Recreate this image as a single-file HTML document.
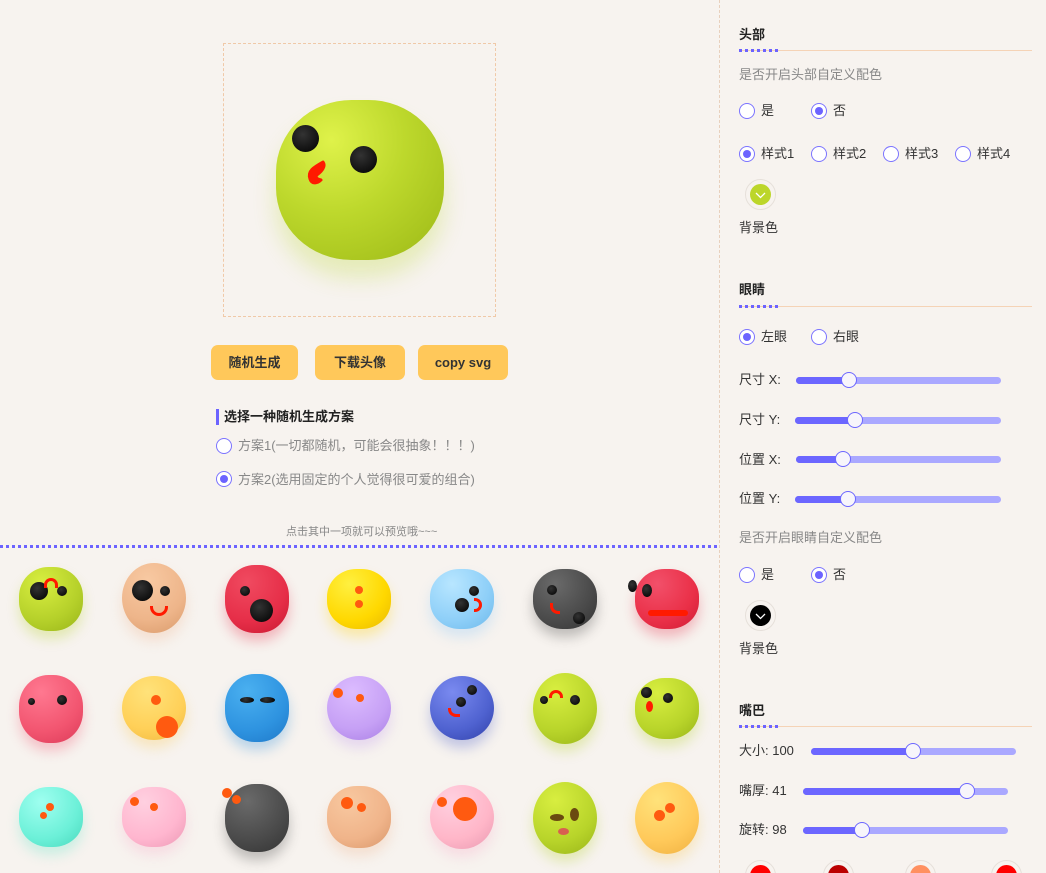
<!DOCTYPE html>
<html><head><meta charset="utf-8"><style>
*{margin:0;padding:0;box-sizing:border-box}
html,body{width:1046px;height:873px;overflow:hidden}
body{background:#f7f3ef;font-family:"Liberation Sans","Noto Sans CJK SC",sans-serif;color:#333;position:relative;font-size:13px;line-height:16px}
.a{position:absolute}
.box{left:223px;top:43px;width:273px;height:274px;border:1px dashed #f0c9a8}
.btn{top:345px;height:35px;background:#ffc85a;border-radius:7px;font-size:13px;font-weight:bold;color:#333;text-align:center;line-height:35px}
.r{width:16px;height:16px;border:1px solid #7b73ff;border-radius:50%;background:#fff}
.r.on::after{content:"";position:absolute;left:3px;top:3px;width:8px;height:8px;border-radius:50%;background:#6c63ff}
.side{left:719px;top:0;height:873px;border-left:1px dashed #e8d0bc}
.h{font-weight:bold;font-size:13px;color:#222}
.ln{height:1px;background:#f5d3b6;width:293px;left:739px}
.dt{height:3px;width:40px;left:739px;background:repeating-linear-gradient(90deg,#6c63ff 0 3px,transparent 3px 6px)}
.g{color:#888;font-size:13px}
.tk{height:7px;border-radius:4px;background:#aaa8ff}
.tk i{position:absolute;left:0;top:0;height:7px;border-radius:4px;background:#6c66ff}
.th{width:16px;height:16px;border-radius:50%;background:#f7f5fb;border:1px solid #6c66ff;top:-5px}
.b{width:64px;height:64px;border-radius:46%}
.e{position:absolute;border-radius:50%;background:radial-gradient(circle at 40% 35%,#333,#000)}
.m{position:absolute;border:3px solid #ff1a00;border-radius:10px}
.o{position:absolute;border-radius:50%;background:#ff5a10}
.cp{width:31px;height:31px;border-radius:50%;border:1px solid #e6e0da}
.ci{width:21px;height:21px;border-radius:50%}
</style></head><body>
<div class="a box"></div>
<div class="a" style="left:276px;top:100px;width:168px;height:160px;border-radius:45%;background:radial-gradient(circle at 33% 25%,#dff24a,#bdd82c 45%,#a8c41e 80%,#8ea810);box-shadow:0 18px 22px rgba(190,220,60,.3)"></div>
<div class="e" style="left:292px;top:125px;width:27px;height:27px"></div>
<div class="e" style="left:350px;top:146px;width:27px;height:27px"></div>
<svg class="a" style="left:300px;top:155px" width="40" height="40"><path d="M23 7 C14 12,7 16,10 24 C12 30,18 28,21 25 C17 24,14 22,18 19 C22 16,26 11,23 7Z" fill="#ff1a00" stroke="#ff1a00" stroke-width="3" stroke-linejoin="round"/></svg>

<div class="a btn" style="left:211px;width:87px">随机生成</div>
<div class="a btn" style="left:315px;width:90px">下载头像</div>
<div class="a btn" style="left:418px;width:90px">copy svg</div>
<div class="a" style="left:216px;top:409px;width:3px;height:16px;background:#6c63ff"></div>
<div class="a h" style="left:224px;top:409px">选择一种随机生成方案</div>
<div class="a r" style="left:216px;top:438px"></div><div class="a g" style="left:238px;top:438px">方案1(一切都随机，可能会很抽象！！！)</div>
<div class="a r on" style="left:216px;top:471px"></div><div class="a g" style="left:238px;top:472px">方案2(选用固定的个人觉得很可爱的组合)</div>
<div class="a g" style="left:286px;top:524px;font-size:11px">点击其中一项就可以预览哦~~~</div>
<div class="a" style="left:0;top:545px;width:718px;height:3px;background:repeating-linear-gradient(90deg,#6c63ff 0 3px,transparent 3px 6px)"></div>

<!-- row1 -->
<div class="a b" style="left:19px;top:567px;background:radial-gradient(circle at 35% 25%,#d8ee40,#b5d02a 60%,#98b418);box-shadow:0 8px 12px rgba(180,210,40,.3)"></div>
<div class="e" style="left:30px;top:582px;width:18px;height:18px"></div><div class="e" style="left:57px;top:586px;width:10px;height:10px"></div>
<div class="a m" style="left:44px;top:578px;width:14px;height:10px;border-bottom:none;border-radius:8px 8px 0 0"></div>
<div class="a b" style="left:122px;top:563px;height:70px;border-radius:50%;background:radial-gradient(circle at 40% 25%,#f8c9a2,#eeb58a 60%,#d99a6a);box-shadow:0 8px 12px rgba(240,180,140,.3)"></div>
<div class="e" style="left:132px;top:580px;width:21px;height:21px"></div><div class="e" style="left:160px;top:586px;width:10px;height:10px"></div>
<div class="a m" style="left:150px;top:606px;width:18px;height:10px;border-top:none;border-radius:0 0 10px 10px"></div>
<div class="a b" style="left:225px;top:565px;height:68px;background:radial-gradient(circle at 35% 25%,#f04a60,#e62e48 60%,#c81830);box-shadow:0 8px 12px rgba(230,40,70,.3)"></div>
<div class="e" style="left:240px;top:586px;width:10px;height:10px"></div><div class="e" style="left:250px;top:599px;width:23px;height:23px"></div>
<div class="a b" style="left:327px;top:569px;height:60px;background:radial-gradient(circle at 35% 25%,#fff040,#ffd800 60%,#e8b800);box-shadow:0 8px 12px rgba(255,210,0,.3)"></div>
<div class="o" style="left:355px;top:586px;width:8px;height:8px"></div><div class="o" style="left:355px;top:600px;width:8px;height:8px"></div>
<div class="a b" style="left:430px;top:569px;height:60px;background:radial-gradient(circle at 35% 25%,#b8e6ff,#8ecff8 60%,#6cb8ea);box-shadow:0 8px 12px rgba(140,200,250,.3)"></div>
<div class="e" style="left:455px;top:598px;width:14px;height:14px"></div><div class="e" style="left:469px;top:586px;width:10px;height:10px"></div>
<div class="a m" style="left:474px;top:598px;width:8px;height:14px;border-left:none;border-radius:0 8px 8px 0"></div>
<div class="a b" style="left:533px;top:569px;height:60px;background:radial-gradient(circle at 35% 25%,#6a6a6a,#4a4a4a 60%,#333);box-shadow:0 8px 12px rgba(60,60,60,.3)"></div>
<div class="e" style="left:547px;top:585px;width:10px;height:10px"></div><div class="e" style="left:573px;top:612px;width:12px;height:12px"></div>
<div class="a m" style="left:550px;top:603px;width:10px;height:11px;border-top:none;border-right:none;border-radius:0 0 0 8px"></div>
<div class="a b" style="left:635px;top:569px;height:60px;background:radial-gradient(circle at 35% 25%,#f2506a,#ea3048 60%,#cf1c34);box-shadow:0 8px 12px rgba(230,40,70,.3)"></div>
<div class="e" style="left:628px;top:580px;width:9px;height:12px"></div><div class="e" style="left:642px;top:584px;width:10px;height:13px"></div>
<div class="a" style="left:648px;top:610px;width:40px;height:6px;border-radius:4px;background:#ff1a00"></div>
<!-- row2 -->
<div class="a b" style="left:19px;top:675px;height:68px;background:radial-gradient(circle at 35% 25%,#ff7890,#f25570 60%,#dc3a58);box-shadow:0 8px 12px rgba(240,80,110,.3)"></div>
<div class="e" style="left:28px;top:698px;width:7px;height:7px"></div><div class="e" style="left:57px;top:695px;width:10px;height:10px"></div>
<div class="a b" style="left:122px;top:676px;border-radius:50%;background:radial-gradient(circle at 40% 25%,#ffe27a,#ffd058 60%,#f0b840);box-shadow:0 8px 12px rgba(250,200,80,.3)"></div>
<div class="o" style="left:151px;top:695px;width:10px;height:10px"></div><div class="o" style="left:156px;top:716px;width:22px;height:22px"></div>
<div class="a b" style="left:225px;top:674px;height:68px;background:radial-gradient(circle at 35% 25%,#4ab0f0,#2e93e0 60%,#1e78c8);box-shadow:0 8px 12px rgba(40,140,220,.3)"></div>
<div class="e" style="left:240px;top:697px;width:14px;height:6px"></div><div class="e" style="left:260px;top:697px;width:15px;height:6px"></div>
<div class="a b" style="left:327px;top:676px;border-radius:50%;background:radial-gradient(circle at 40% 25%,#dcbcff,#c6a0f5 60%,#a87ee4);box-shadow:0 8px 12px rgba(190,150,240,.3)"></div>
<div class="o" style="left:333px;top:688px;width:10px;height:10px"></div><div class="o" style="left:356px;top:694px;width:8px;height:8px"></div>
<div class="a b" style="left:430px;top:676px;border-radius:50%;background:radial-gradient(circle at 35% 25%,#7a8af0,#4f62d0 60%,#3040a8);box-shadow:0 8px 12px rgba(70,90,200,.3)"></div>
<div class="e" style="left:456px;top:697px;width:10px;height:10px"></div><div class="e" style="left:467px;top:685px;width:10px;height:10px"></div>
<div class="a m" style="left:448px;top:708px;width:12px;height:9px;border-top:none;border-right:none;border-radius:0 0 0 8px"></div>
<div class="a b" style="left:533px;top:673px;height:71px;border-radius:50%;background:radial-gradient(circle at 35% 25%,#d8ee40,#b8d42a 60%,#98b418);box-shadow:0 8px 12px rgba(180,210,40,.3)"></div>
<div class="e" style="left:540px;top:696px;width:8px;height:8px"></div><div class="e" style="left:570px;top:695px;width:10px;height:10px"></div>
<div class="a m" style="left:549px;top:690px;width:14px;height:8px;border-bottom:none;border-radius:8px 8px 0 0"></div>
<div class="a b" style="left:635px;top:678px;height:61px;background:radial-gradient(circle at 35% 25%,#d8ee40,#b8d42a 60%,#98b418);box-shadow:0 8px 12px rgba(180,210,40,.3)"></div>
<div class="e" style="left:641px;top:687px;width:11px;height:11px"></div><div class="e" style="left:663px;top:693px;width:10px;height:10px"></div>
<div class="a" style="left:646px;top:701px;width:7px;height:11px;border-radius:50%;background:#ff1a00"></div>
<!-- row3 -->
<div class="a b" style="left:19px;top:787px;height:60px;background:radial-gradient(circle at 35% 25%,#9ffff0,#6cf0d8 60%,#48d8bc);box-shadow:0 8px 12px rgba(100,230,200,.3)"></div>
<div class="o" style="left:46px;top:803px;width:8px;height:8px"></div><div class="o" style="left:40px;top:812px;width:7px;height:7px"></div>
<div class="a b" style="left:122px;top:787px;height:60px;background:radial-gradient(circle at 35% 25%,#ffd0e0,#ffb6cf 60%,#ec98b4);box-shadow:0 8px 12px rgba(250,170,200,.3)"></div>
<div class="o" style="left:130px;top:797px;width:9px;height:9px"></div><div class="o" style="left:150px;top:803px;width:8px;height:8px"></div>
<div class="a b" style="left:225px;top:784px;height:68px;background:radial-gradient(circle at 35% 25%,#6a6a6a,#4a4a4a 60%,#333);box-shadow:0 8px 12px rgba(60,60,60,.3)"></div>
<div class="o" style="left:222px;top:788px;width:10px;height:10px"></div><div class="o" style="left:232px;top:795px;width:9px;height:9px"></div>
<div class="a b" style="left:327px;top:786px;height:62px;background:radial-gradient(circle at 35% 25%,#f8c8a0,#f0b48a 60%,#d8966a);box-shadow:0 8px 12px rgba(240,180,140,.3)"></div>
<div class="o" style="left:341px;top:797px;width:12px;height:12px"></div><div class="o" style="left:357px;top:803px;width:9px;height:9px"></div>
<div class="a b" style="left:430px;top:785px;border-radius:50%;background:radial-gradient(circle at 35% 25%,#ffd0e0,#ffb6c8 60%,#e898b0);box-shadow:0 8px 12px rgba(250,170,200,.3)"></div>
<div class="o" style="left:437px;top:797px;width:10px;height:10px"></div><div class="o" style="left:453px;top:797px;width:24px;height:24px"></div>
<div class="a b" style="left:533px;top:782px;height:72px;border-radius:50%;background:radial-gradient(circle at 35% 25%,#d8ee40,#b8d42a 60%,#98b418);box-shadow:0 8px 12px rgba(180,210,40,.3)"></div>
<div class="a" style="left:550px;top:814px;width:14px;height:7px;border-radius:50%;background:#6a4a10"></div><div class="a" style="left:570px;top:808px;width:9px;height:13px;border-radius:50%;background:#6a4a10"></div>
<div class="a" style="left:558px;top:828px;width:11px;height:7px;border-radius:50%;background:#d86050"></div>
<div class="a b" style="left:635px;top:782px;height:72px;border-radius:50%;background:radial-gradient(circle at 35% 25%,#ffe27a,#ffc95a 60%,#efb040);box-shadow:0 8px 12px rgba(250,200,80,.3)"></div>
<div class="o" style="left:654px;top:810px;width:11px;height:11px"></div><div class="o" style="left:665px;top:803px;width:10px;height:10px"></div>

<!-- sidebar -->
<div class="a side"></div>
<div class="a h" style="left:739px;top:27px">头部</div>
<div class="a ln" style="top:50px"></div><div class="a dt" style="top:49px"></div>
<div class="a g" style="left:739px;top:67px">是否开启头部自定义配色</div>
<div class="a r" style="left:739px;top:103px"></div><div class="a" style="left:761px;top:103px">是</div>
<div class="a r on" style="left:811px;top:103px"></div><div class="a" style="left:833px;top:103px">否</div>
<div class="a r on" style="left:739px;top:146px"></div><div class="a" style="left:761px;top:146px">样式1</div>
<div class="a r" style="left:811px;top:146px"></div><div class="a" style="left:833px;top:146px">样式2</div>
<div class="a r" style="left:883px;top:146px"></div><div class="a" style="left:905px;top:146px">样式3</div>
<div class="a r" style="left:955px;top:146px"></div><div class="a" style="left:977px;top:146px">样式4</div>
<div class="a cp" style="left:745px;top:179px"></div>
<div class="a ci" style="left:750px;top:184px;background:#bcd62a"><svg width="21" height="21"><path d="M6 9 L10.5 13.5 L15 9" fill="none" stroke="#fff" stroke-width="1.3"/></svg></div>
<div class="a" style="left:739px;top:220px">背景色</div>

<div class="a h" style="left:739px;top:282px">眼睛</div>
<div class="a ln" style="top:306px"></div><div class="a dt" style="top:305px"></div>
<div class="a r on" style="left:739px;top:329px"></div><div class="a" style="left:761px;top:329px">左眼</div>
<div class="a r" style="left:811px;top:329px"></div><div class="a" style="left:833px;top:329px">右眼</div>
<div class="a" style="left:739px;top:372px">尺寸 X:</div><div class="a tk" style="left:796px;top:377px;width:205px"><i style="width:53px"></i><div class="a th" style="left:45px"></div></div>
<div class="a" style="left:739px;top:412px">尺寸 Y:</div><div class="a tk" style="left:795px;top:417px;width:206px"><i style="width:60px"></i><div class="a th" style="left:52px"></div></div>
<div class="a" style="left:739px;top:452px">位置 X:</div><div class="a tk" style="left:796px;top:456px;width:205px"><i style="width:47px"></i><div class="a th" style="left:39px"></div></div>
<div class="a" style="left:739px;top:491px">位置 Y:</div><div class="a tk" style="left:795px;top:496px;width:206px"><i style="width:53px"></i><div class="a th" style="left:45px"></div></div>
<div class="a g" style="left:739px;top:530px">是否开启眼睛自定义配色</div>
<div class="a r" style="left:739px;top:567px"></div><div class="a" style="left:761px;top:567px">是</div>
<div class="a r on" style="left:811px;top:567px"></div><div class="a" style="left:833px;top:567px">否</div>
<div class="a cp" style="left:745px;top:600px"></div>
<div class="a ci" style="left:750px;top:605px;background:#000"><svg width="21" height="21"><path d="M6 9 L10.5 13.5 L15 9" fill="none" stroke="#fff" stroke-width="1.3"/></svg></div>
<div class="a" style="left:739px;top:641px">背景色</div>

<div class="a h" style="left:739px;top:703px">嘴巴</div>
<div class="a ln" style="top:726px"></div><div class="a dt" style="top:725px"></div>
<div class="a" style="left:739px;top:743px">大小: 100</div><div class="a tk" style="left:811px;top:748px;width:205px"><i style="width:102px"></i><div class="a th" style="left:94px"></div></div>
<div class="a" style="left:739px;top:783px">嘴厚: 41</div><div class="a tk" style="left:803px;top:788px;width:205px"><i style="width:164px"></i><div class="a th" style="left:156px"></div></div>
<div class="a" style="left:739px;top:822px">旋转: 98</div><div class="a tk" style="left:803px;top:827px;width:205px"><i style="width:59px"></i><div class="a th" style="left:51px"></div></div>
<div class="a cp" style="left:745px;top:860px"></div><div class="a ci" style="left:750px;top:865px;background:#f00"></div>
<div class="a cp" style="left:823px;top:860px"></div><div class="a ci" style="left:828px;top:865px;background:#b00"></div>
<div class="a cp" style="left:905px;top:860px"></div><div class="a ci" style="left:910px;top:865px;background:#ff9060"></div>
<div class="a cp" style="left:991px;top:860px"></div><div class="a ci" style="left:996px;top:865px;background:#f00"></div>
</body></html>
